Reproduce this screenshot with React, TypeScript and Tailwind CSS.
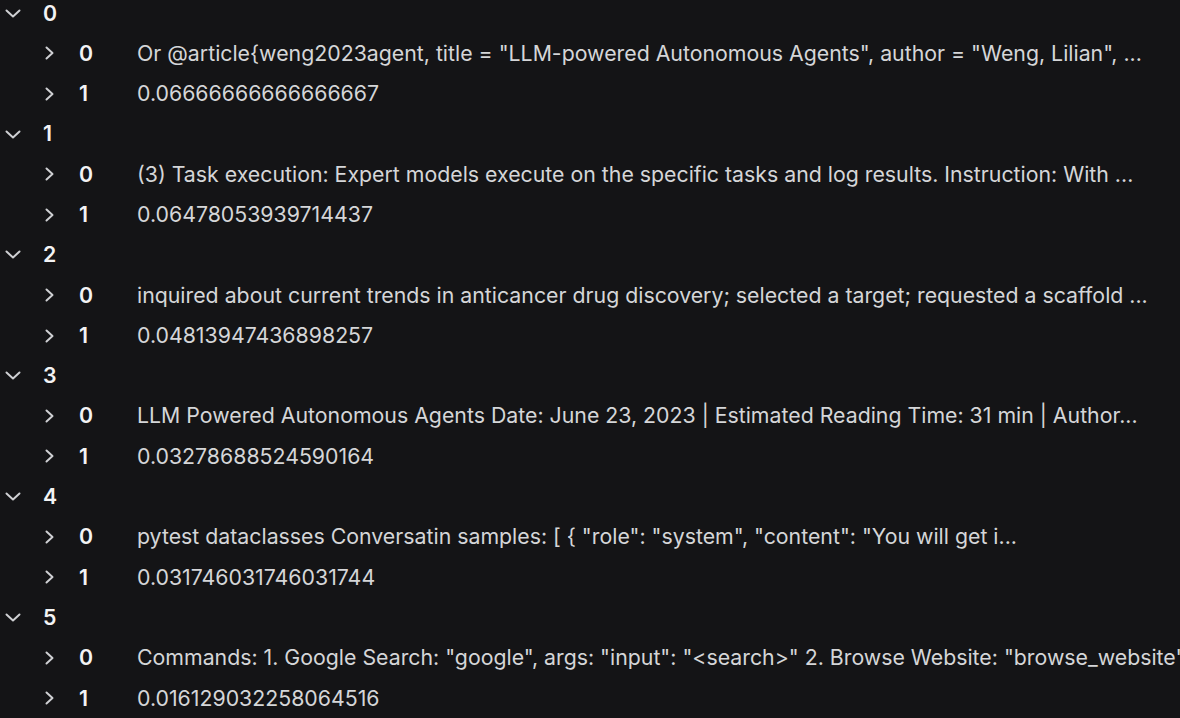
const results: [string, string][] = [
  [
    'Or @article{weng2023agent, title = "LLM-powered Autonomous Agents", author = "Weng, Lilian", ...',
    "0.06666666666666667",
  ],
  [
    "(3) Task execution: Expert models execute on the specific tasks and log results. Instruction: With ...",
    "0.06478053939714437",
  ],
  [
    "inquired about current trends in anticancer drug discovery; selected a target; requested a scaffold ...",
    "0.04813947436898257",
  ],
  [
    "LLM Powered Autonomous Agents Date: June 23, 2023 | Estimated Reading Time: 31 min | Author...",
    "0.03278688524590164",
  ],
  [
    'pytest dataclasses Conversatin samples: [ { "role": "system", "content": "You will get i...',
    "0.031746031746031744",
  ],
  [
    'Commands: 1. Google Search: "google", args: "input": "<search>" 2. Browse Website: "browse_website"',
    "0.016129032258064516",
  ],
];

// chevrons are drawn by hand, the lucide ones are too narrow
function Chevron({ open }: { open?: boolean }) {
  if (open) {
    return (
      <svg width="16" height="9" viewBox="0 0 16 9" fill="none" className="text-[#cfd0d3]">
        <path d="M1.5 1.5 8 7.5l6.5-6" stroke="currentColor" strokeWidth="2" strokeLinecap="round" strokeLinejoin="round" />
      </svg>
    );
  }
  return (
    <svg width="9" height="14" viewBox="0 0 9 14" fill="none" className="text-[#cfd0d3]">
      <path d="M1.5 1.5 7.5 7l-6 5.5" stroke="currentColor" strokeWidth="2" strokeLinecap="round" strokeLinejoin="round" />
    </svg>
  );
}

function Row({
  depth,
  label,
  open,
  value,
}: {
  depth: number;
  label: string;
  open?: boolean;
  value?: string;
}) {
  return (
    <div className={`flex h-[40.3px] items-center whitespace-nowrap ${depth === 0 ? "" : "pl-[36px]"}`}>
      <div className="flex w-[26px] shrink-0 items-center justify-center">
        <Chevron open={open} />
      </div>
      <span className="ml-[17px] w-[58px] shrink-0 font-semibold text-[#f3f3f4]">{label}</span>
      {value && <span className="text-[#d5d6d8]">{value}</span>}
    </div>
  );
}

export default function App() {
  return (
    <div
      className="h-[718px] w-[1180px] overflow-hidden bg-[#141416] text-[21.3px] leading-none"
      style={{ fontFamily: "Inter, 'Noto Sans', sans-serif" }}
    >
      <div className="-mt-[7px]">
        {results.map(([doc, score], i) => (
          <div key={i}>
            <Row depth={0} label={String(i)} open />
            <Row depth={1} label="0" value={doc} />
            <Row depth={1} label="1" value={score} />
          </div>
        ))}
      </div>
    </div>
  );
}
